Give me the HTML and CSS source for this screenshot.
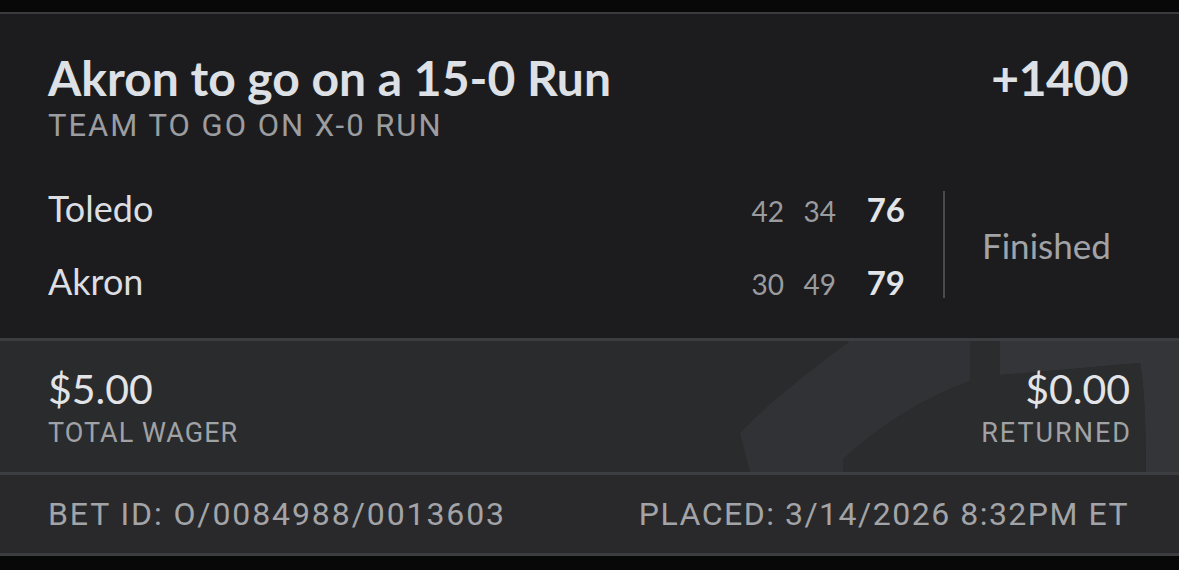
FILE: index.html
```html
<!DOCTYPE html>
<html lang="en">
<head>
  <meta charset="UTF-8">
  <title>Bet Slip</title>
  <link rel="stylesheet" href="styles.css">
</head>
<body>
  <div class="slip">
    <div class="slip-main">
      <div class="slip-head">
        <div>
          <div class="slip-title">Akron to go on a 15-0 Run</div>
          <div class="slip-market">TEAM TO GO ON X-0 RUN</div>
        </div>
        <div class="slip-odds">+1400</div>
      </div>
      <div class="game">
        <div class="teams">
          <div class="team-row">
            <span class="team-name">Toledo</span>
            <span class="period">42</span>
            <span class="period">34</span>
            <span class="total">76</span>
          </div>
          <div class="team-row">
            <span class="team-name">Akron</span>
            <span class="period">30</span>
            <span class="period">49</span>
            <span class="total">79</span>
          </div>
        </div>
        <div class="game-divider"></div>
        <div class="game-status">Finished</div>
      </div>
    </div>

    <div class="wager">
      <svg class="wager-mark" viewBox="0 0 1179 131" preserveAspectRatio="none">
        <path d="M850,0 Q775,55 740,92 L750,131 L843,131 L843,118 Q900,66 970,40 L970,0 Z" fill="#313235"/>
        <path d="M1000,0 H1179 V131 H1146 C1146,90 1145,50 1140,22 L1000,34 Z" fill="#343538"/>
        <path d="M970,0 H1000 V34 L1140,22 C1145,50 1146,90 1146,131 H843 V118 Q900,66 970,40 Z" fill="#2b2c2e"/>
      </svg>
      <div class="amount">
        <div class="amount-value">$5.00</div>
        <div class="amount-label">TOTAL WAGER</div>
      </div>
      <div class="amount amount-right">
        <div class="amount-value">$0.00</div>
        <div class="amount-label">RETURNED</div>
      </div>
    </div>

    <div class="slip-foot">
      <span>BET ID: O/0084988/0013603</span>
      <span>PLACED: 3/14/2026 8:32PM ET</span>
    </div>
  </div>
</body>
</html>
```

FILE: styles.css
```css
*{
  padding: 0;
  margin: 0;
  box-sizing: border-box;
}
body{
  background: #080808;
  font-family: "Lato", "Noto Sans", sans-serif;
  color: #dfe1e5;
  padding-top: 12px;
  height: 570px;
  overflow: hidden;
}
.slip-main{
  border-top: 2px solid #3b3b3d;
  background: #1c1c1e;
  height: 326px;
  padding: 41px 51px 0 48px;
}
.slip-head{
  display: flex;
  justify-content: space-between;
  align-items: flex-start;
}
.slip-title,
.slip-odds{
  font-size: 48px;
  font-weight: 700;
  line-height: 46px;
  color: #dde0e5;
}
.slip-odds{
  letter-spacing: -0.5px;
}
.slip-market{
  font-family: "Roboto", sans-serif;
  font-size: 31px;
  line-height: 32px;
  letter-spacing: 2px;
  color: #9b9da0;
  margin-top: 9px;
}
.game{
  display: flex;
  align-items: center;
  margin-top: 48px;
}
.teams{
  flex: 1;
  display: flex;
  flex-direction: column;
  gap: 37px;
}
.team-row{
  display: flex;
  align-items: baseline;
  height: 36px;
  line-height: 36px;
}
.team-name{
  flex: 1;
  font-size: 36px;
  color: #dcdee2;
}
.period{
  width: 34px;
  text-align: right;
  font-size: 28px;
  color: #9a9b9e;
  margin-left: 18px;
}
.total{
  width: 40px;
  text-align: right;
  font-size: 33px;
  font-weight: 700;
  color: #e2e4e8;
  margin-left: 29px;
}
.game-divider{
  width: 2px;
  height: 107px;
  background: #4a4a4c;
  margin-left: 38px;
}
.game-status{
  width: 183px;
  padding-left: 37px;
  font-size: 35px;
  color: #a2a3a6;
}
.wager{
  position: relative;
  border-top: 3px solid #3c3d40;
  background: #2a2b2d;
  height: 134px;
  display: flex;
  justify-content: space-between;
  padding: 26px 49px 0 48px;
}
.wager-mark{
  position: absolute;
  left: 0;
  top: 0;
  width: 100%;
  height: 131px;
}
.amount{
  position: relative;
}
.amount-right{
  text-align: right;
}
.amount-value{
  font-size: 41px;
  line-height: 44px;
  color: #e2e4e7;
}
.amount-label{
  font-family: "Roboto", sans-serif;
  font-size: 27px;
  line-height: 30px;
  letter-spacing: 1px;
  margin-top: 7px;
  color: #a0a2a5;
}
.amount-right .amount-label{
  letter-spacing: 2px;
  margin-right: -2px;
}
.slip-foot{
  border-top: 3px solid #3c3d40;
  border-bottom: 3px solid #3c3d40;
  background: #29292b;
  height: 84px;
  display: flex;
  justify-content: space-between;
  align-items: center;
  padding: 0 50px 0 48px;
  font-family: "Roboto", sans-serif;
  font-size: 32px;
  letter-spacing: 1.5px;
  color: #a3a4a7;
}
.slip-foot span:first-child{
  letter-spacing: 1.9px;
}
```
